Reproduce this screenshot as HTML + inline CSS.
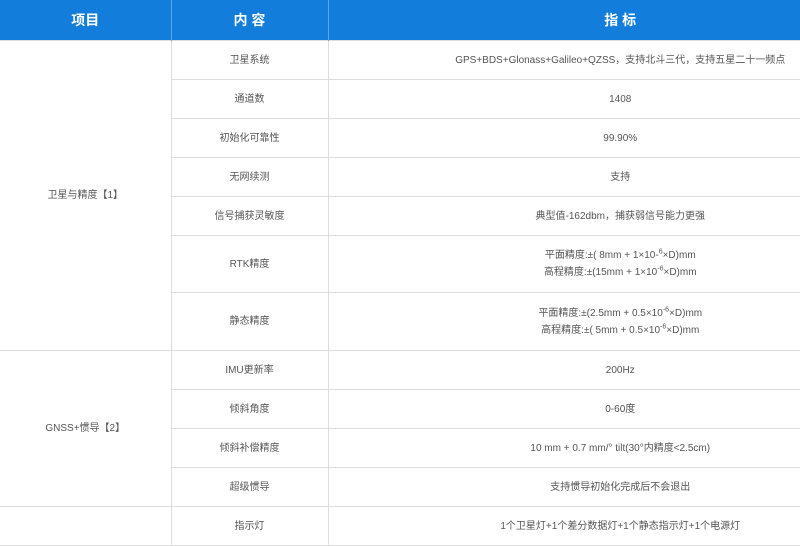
<!DOCTYPE html>
<html><head><meta charset="utf-8"><style>
html,body{margin:0;padding:0;background:#fff;width:800px;height:543px;overflow:hidden}
table{border-collapse:collapse;table-layout:fixed;position:absolute;left:0;top:0;width:800px;font-family:"Liberation Sans","Noto Sans CJK SC",sans-serif;font-size:10px;color:#555}
td,th{border:1px solid #ddd;text-align:center;padding:0;line-height:17px}
th{background:#137ddc;color:#fff;font-size:14px;font-weight:bold;height:40px;border-color:#5aa3e6;border-top:none;border-bottom:none}
th:first-child,td.a{border-left:none}
td.c,th.c{border-right:none;padding-left:112px}
sup{font-size:7px;line-height:0}
</style></head><body>
<table>
<colgroup><col style="width:171px"><col style="width:157px"><col style="width:472px"></colgroup>
<tr><th>项目</th><th>内 容</th><th class="c">指 标</th></tr>
<tr style="height:39px"><td class="a" rowspan="7">卫星与精度【1】</td><td>卫星系统</td><td class="c">GPS+BDS+Glonass+Galileo+QZSS，支持北斗三代，支持五星二十一频点</td></tr>
<tr style="height:39px"><td>通道数</td><td class="c">1408</td></tr>
<tr style="height:39px"><td>初始化可靠性</td><td class="c">99.90%</td></tr>
<tr style="height:39px"><td>无网续测</td><td class="c">支持</td></tr>
<tr style="height:39px"><td>信号捕获灵敏度</td><td class="c">典型值-162dbm，捕获弱信号能力更强</td></tr>
<tr style="height:57px"><td>RTK精度</td><td class="c">平面精度:±( 8mm + 1×10-<sup>6</sup>×D)mm<br>高程精度:±(15mm + 1×10<sup>-6</sup>×D)mm</td></tr>
<tr style="height:58px"><td>静态精度</td><td class="c">平面精度:±(2.5mm + 0.5×10<sup>-6</sup>×D)mm<br>高程精度:±( 5mm + 0.5×10<sup>-6</sup>×D)mm</td></tr>
<tr style="height:39px"><td class="a" rowspan="4">GNSS+惯导【2】</td><td>IMU更新率</td><td class="c">200Hz</td></tr>
<tr style="height:39px"><td>倾斜角度</td><td class="c">0-60度</td></tr>
<tr style="height:39px"><td>倾斜补偿精度</td><td class="c">10 mm + 0.7 mm/° tilt(30°内精度&lt;2.5cm)</td></tr>
<tr style="height:39px"><td>超级惯导</td><td class="c">支持惯导初始化完成后不会退出</td></tr>
<tr style="height:39px"><td class="a"></td><td>指示灯</td><td class="c">1个卫星灯+1个差分数据灯+1个静态指示灯+1个电源灯</td></tr>
</table>
</body></html>
